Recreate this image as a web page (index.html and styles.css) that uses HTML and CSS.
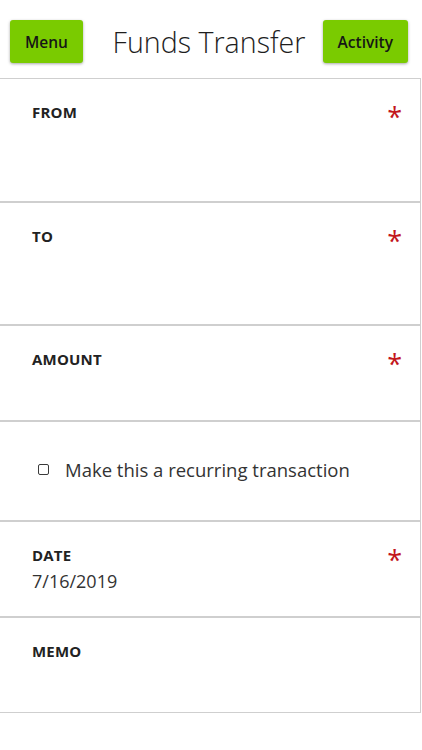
FILE: index.html
```html
<!DOCTYPE html>
<html lang="en">
<head>
<meta charset="utf-8">
<title>Funds Transfer</title>
<link rel="stylesheet" href="styles.css">
</head>
<body>
<header class="topbar">
  <div class="left"><button class="btn">Menu</button></div>
  <h1 class="title">Funds Transfer</h1>
  <div class="right"><button class="btn">Activity</button></div>
</header>
<main class="form">
  <section class="field field-tall">
    <div class="row"><span class="label">FROM</span><span class="req">*</span></div>
  </section>
  <section class="field field-tall2">
    <div class="row"><span class="label">TO</span><span class="req">*</span></div>
  </section>
  <section class="field field-short">
    <div class="row"><span class="label">AMOUNT</span><span class="req">*</span></div>
  </section>
  <section class="field field-check">
    <label class="check"><span class="box"></span><span class="check-text">Make this a recurring transaction</span></label>
  </section>
  <section class="field field-short">
    <div class="row"><span class="label">DATE</span><span class="req">*</span></div>
    <div class="value">7/16/2019</div>
  </section>
  <section class="field field-short">
    <div class="row"><span class="label">MEMO</span></div>
  </section>
</main>
</body>
</html>
```
FILE: styles.css
```css
html, body {
  margin: 0;
  padding: 0;
  background: #ffffff;
  font-family: "Open Sans", "Noto Sans", "Liberation Sans", sans-serif;
  color: #222;
}

.topbar {
  display: grid;
  grid-template-columns: 1fr auto 1fr;
  align-items: center;
  padding: 20px 14px 0 10px;
  height: 43px;
  margin-bottom: 15px;
}

.left { justify-self: start; }
.right { justify-self: end; }

.btn {
  font-family: "Open Sans", "Noto Sans", sans-serif;
  font-weight: 600;
  font-size: 15.5px;
  color: #161616;
  background: #7acb00;
  border: none;
  border-radius: 3px;
  height: 43px;
  padding: 0 15px;
  box-shadow: 0 1px 3px rgba(0, 0, 0, 0.35);
}

.title {
  margin: 0;
  font-weight: 300;
  font-size: 28.6px;
  color: #1e1e1e;
  white-space: nowrap;
  padding-top: 0;
}

.form {
  margin-left: -1px;
  width: 422px;
}

.field {
  box-sizing: border-box;
  border: 1px solid #cfcfcf;
  padding: 23px 18px 0 32px;
}

.field + .field { border-top-width: 2px; margin-top: -1px; }

.field-tall { height: 124px; }
.field-tall2 { height: 124px; }
.field-short { height: 97px; }
.field-check {
  height: 101px;
  display: flex;
  align-items: center;
  padding: 0 20px 4px 38px;
}

.row {
  display: flex;
  justify-content: space-between;
  align-items: flex-start;
  height: 20px;
}

.label {
  font-weight: 700;
  font-size: 15px;
  line-height: 20px;
  color: #222;
  letter-spacing: 0.2px;
  padding-top: 0;
}

.req {
  color: #c3161c;
  font-size: 27px;
  line-height: 20px;
  padding-top: 5px;
  font-weight: 400;
}

.value {
  margin-top: 4px;
  font-size: 18px;
  line-height: 24px;
  color: #333;
}

.check {
  display: flex;
  align-items: center;
  gap: 16px;
}

.box {
  width: 9px;
  height: 9px;
  border: 1.5px solid #3a3a3a;
  border-radius: 2px;
}

.check-text {
  font-size: 18.5px;
  color: #333;
}
```
